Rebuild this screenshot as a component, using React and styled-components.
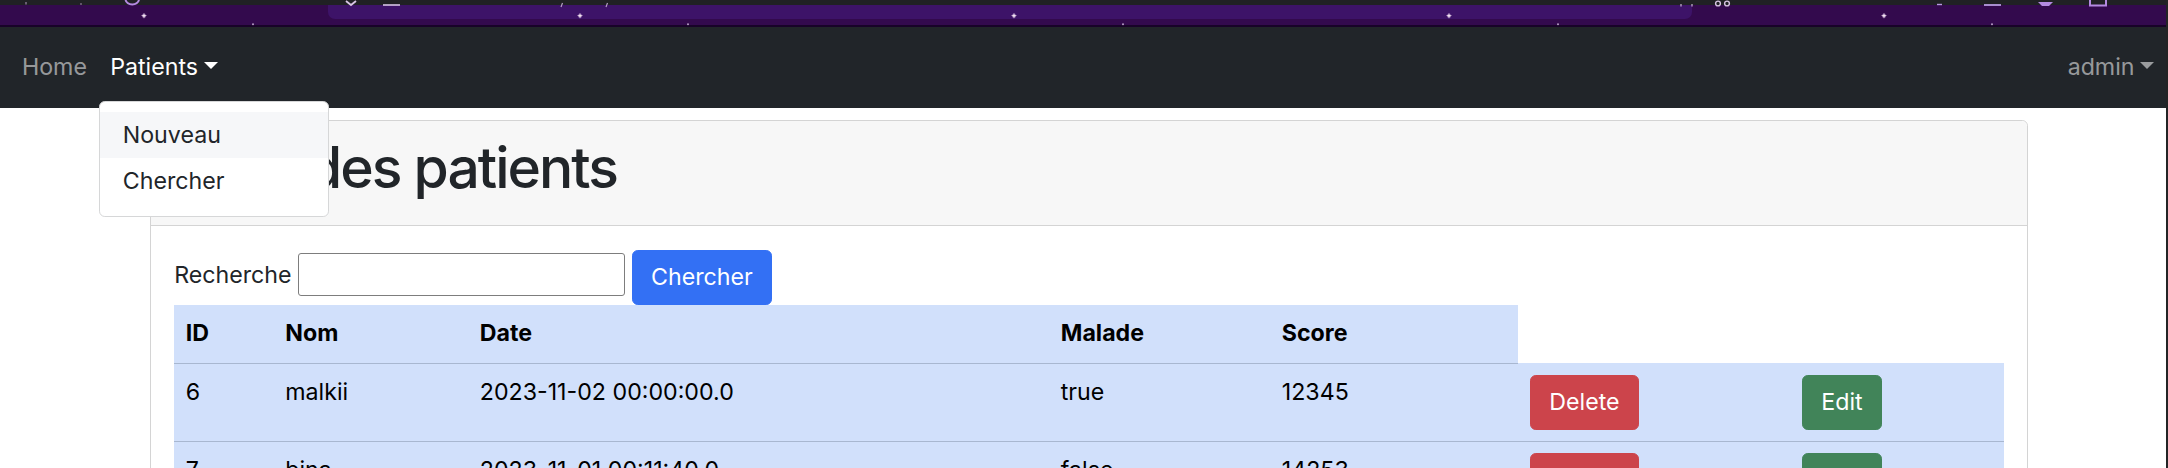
import React from "react";
import styled, { createGlobalStyle } from "styled-components";

const GlobalStyle = createGlobalStyle`
  html, body {
    margin: 0;
    padding: 0;
    overflow: hidden;
    background: #ffffff;
  }
  body {
    font-family: Inter, "Noto Sans", sans-serif;
    font-size: 23.2px;
    line-height: 34.8px;
    color: #212529;
  }
  *, *::before, *::after { box-sizing: border-box; }
`;

const Page = styled.div`
  position: relative;
  width: 2168px;
  height: 468px;
  overflow: hidden;
  border-right: 2px solid #232425;
  background: #ffffff;
`;

/* ---------- browser chrome strip ---------- */
const ChromeStrip = styled.div`
  position: relative;
  height: 27px;
  display: flex;
  background: linear-gradient(
    #202124 0 5px,
    #330a4d 5px 25px,
    #180328 25px 27px
  );
`;

const AddressBar = styled.div`
  margin: 5px 0 0 328px;
  width: 1364px;
  height: 14px;
  background: #3d1368;
  border-radius: 0 0 7px 7px;
`;

const ChromeArt = styled.svg`
  position: absolute;
  left: 0;
  top: 0;
  pointer-events: none;
`;

const starXs = [144, 580, 1014, 1449, 1884];
const dotXs = [253, 688, 1123, 1558, 1992];

function Sparkle({ x, y }) {
  const d = `M${x},${y - 3} L${x + 0.7},${y - 0.7} L${x + 3},${y} L${x + 0.7},${y + 0.7} L${x},${y + 3} L${x - 0.7},${y + 0.7} L${x - 3},${y} L${x - 0.7},${y - 0.7} Z`;
  return (
    <g>
      <circle cx={x} cy={y} r="2.2" fill="#a57fc0" opacity="0.5" />
      <path d={d} fill="#f4e6f2" />
    </g>
  );
}

function ChromeDecor() {
  return (
    <ChromeArt width="2166" height="27" viewBox="0 0 2166 27">
      {starXs.map((x) => (
        <Sparkle key={x} x={x} y={15.7} />
      ))}
      {dotXs.map((x) => (
        <circle key={x} cx={x} cy="24.2" r="1" fill="#b59cc4" />
      ))}
      {/* cut-off toolbar icons */}
      <path d="M26 2 L26 4.5" stroke="#9a86a8" strokeWidth="1.2" />
      <path d="M81 3 L81 5" stroke="#8b7898" strokeWidth="1.2" />
      <path d="M125.5 0 A7 6 0 0 0 139 0" fill="none" stroke="#b58be2" strokeWidth="2" />
      <path d="M346 1 L351 5 L356 1" fill="none" stroke="#d9c6e6" strokeWidth="1.8" />
      <path d="M383 5 L400 5" stroke="#d5c3e4" strokeWidth="1.6" />
      <path d="M561 7 L562.5 3" stroke="#b9a3c9" strokeWidth="1.2" />
      <path d="M606 7 L607.5 3" stroke="#b9a3c9" strokeWidth="1.2" />
      <path d="M1681 4 L1681 6.5" stroke="#c9b6d6" strokeWidth="1.2" />
      <path d="M1692 4 L1692 6.5" stroke="#c9b6d6" strokeWidth="1.2" />
      <circle cx="1718" cy="3.5" r="2.4" fill="none" stroke="#d6c4e2" strokeWidth="1.4" />
      <circle cx="1727" cy="3.5" r="2.4" fill="none" stroke="#d6c4e2" strokeWidth="1.4" />
      <path d="M1937 4.5 L1942 4.5" stroke="#b79be0" strokeWidth="1.4" />
      <path d="M1984 5 L2001 5" stroke="#b79be0" strokeWidth="1.8" />
      <path d="M2038 2 L2053 2 L2049 6 L2042 6 Z" fill="#b48ae2" />
      <path d="M2090 0 L2090 5.5 L2106 5.5 L2106 0" fill="none" stroke="#b48ae2" strokeWidth="2" />
    </ChromeArt>
  );
}

/* ---------- navbar ---------- */
const NavBar = styled.nav`
  height: 81px;
  background: #212529;
  display: flex;
  align-items: center;
  justify-content: space-between;
  padding: 0 0 0 10.4px;
`;

const NavGroup = styled.ul`
  display: flex;
  align-items: center;
  margin: 0;
  padding: 0;
  list-style: none;
`;

const NavItem = styled.li`
  position: relative;
`;

const NavLink = styled.a`
  display: block;
  padding: 11.6px;
  font-size: 23.2px;
  line-height: 34.8px;
  text-decoration: none;
  white-space: nowrap;
  color: ${(p) => (p.$active ? "#ffffff" : "rgba(255,255,255,0.55)")};
`;

const Caret = styled.span`
  display: inline-block;
  margin-left: 5.9px;
  vertical-align: 0.255em;
  border-top: 7px solid currentColor;
  border-left: 7px solid transparent;
  border-right: 7px solid transparent;
`;

const DropdownMenu = styled.ul`
  position: absolute;
  left: 0;
  top: 100%;
  margin: 4.5px 0 0;
  width: 230px;
  padding: 10px 0 11px;
  list-style: none;
  background: #ffffff;
  border: 1px solid #d6d7d8;
  border-radius: 5.8px;
  z-index: 10;
`;

const DropdownItem = styled.li`
  padding: 5.8px 23.2px;
  line-height: 34.8px;
  font-size: 23.2px;
  color: #212529;
  white-space: nowrap;
  background: ${(p) => (p.$hover ? "#f6f7f9" : "transparent")};
`;

/* ---------- content ---------- */
const Container = styled.main`
  margin: 12px 0 0 150px;
  width: 1878px;
`;

const Card = styled.section`
  border: 1px solid #d4d4d4;
  border-radius: 5.8px;
  background: #ffffff;
  min-height: 400px;
`;

const CardHeader = styled.header`
  background: #f7f7f7;
  border-bottom: 1px solid #d4d4d4;
  border-radius: 5.8px 5.8px 0 0;
  padding: 11.6px 23.2px;
`;

const Title = styled.h1`
  margin: 0 0 11.6px;
  font-size: 57px;
  font-weight: 500;
  letter-spacing: -2px;
  line-height: 69.6px;
  color: #212529;
`;

const CardBody = styled.div`
  padding: 23.2px;
`;

const SearchForm = styled.form`
  display: flex;
  align-items: flex-start;
  height: 55px;
`;

const Label = styled.label`
  margin-top: 8px;
  font-size: 23.2px;
  line-height: 34.8px;
  color: #212529;
`;

const TextInput = styled.input`
  margin: 3px 0 0 6px;
  width: 327px;
  height: 43px;
  border: 1px solid #7d7d7d;
  border-radius: 3px;
  background: #ffffff;
  font: inherit;
  padding: 0 6px;
`;

const Button = styled.button`
  height: 55px;
  margin-left: ${(p) => p.$ml || 0}px;
  padding: 0 18.5px;
  border: 1px solid ${(p) => p.$bg};
  border-radius: 5.8px;
  background: ${(p) => p.$bg};
  color: #ffffff;
  font-family: Inter, "Noto Sans", sans-serif;
  font-size: 23.2px;
  line-height: 53px;
  white-space: nowrap;
`;

const Table = styled.table`
  width: 100%;
  border-collapse: collapse;
  table-layout: fixed;
  color: #000000;
  font-size: 23.2px;
  line-height: 34.8px;
`;

const HeadCell = styled.th`
  text-align: left;
  font-weight: 700;
  padding: 11.6px;
  background: #d1e0fb;
  border-bottom: 1px solid #a8b7d0;
  white-space: nowrap;
`;

const Cell = styled.td`
  padding: 11.6px 11.6px 11px;
  background: #d1e0fb;
  border-bottom: 1px solid #a8b7d0;
  vertical-align: top;
  white-space: nowrap;
`;

const colWidths = [99.5, 194.5, 581, 221, 248, 272, null];

const patients = [
  { id: 6, nom: "malkii", date: "2023-11-02 00:00:00.0", malade: "true", score: 12345 },
  { id: 7, nom: "bina", date: "2023-11-01 00:11:40.0", malade: "false", score: 14253 },
];

export default function App() {
  return (
    <Page>
      <GlobalStyle />
      <ChromeStrip>
        <AddressBar />
        <ChromeDecor />
      </ChromeStrip>

      <NavBar>
        <NavGroup>
          <NavItem>
            <NavLink href="#">Home</NavLink>
          </NavItem>
          <NavItem>
            <NavLink href="#" $active>
              Patients
              <Caret />
            </NavLink>
            <DropdownMenu>
              <DropdownItem $hover>Nouveau</DropdownItem>
              <DropdownItem>Chercher</DropdownItem>
            </DropdownMenu>
          </NavItem>
        </NavGroup>
        <NavGroup>
          <NavItem>
            <NavLink href="#">
              admin
              <Caret />
            </NavLink>
          </NavItem>
        </NavGroup>
      </NavBar>

      <Container>
        <Card>
          <CardHeader>
            <Title>Liste des patients</Title>
          </CardHeader>
          <CardBody>
            <SearchForm onSubmit={(e) => e.preventDefault()}>
              <Label htmlFor="kw">Recherche</Label>
              <TextInput id="kw" type="text" />
              <Button type="submit" $bg="#3370f4" $ml={7}>
                Chercher
              </Button>
            </SearchForm>
            <Table>
              <colgroup>
                {colWidths.map((w, i) => (
                  <col key={i} style={w ? { width: `${w}px` } : undefined} />
                ))}
              </colgroup>
              <thead>
                <tr>
                  <HeadCell>ID</HeadCell>
                  <HeadCell>Nom</HeadCell>
                  <HeadCell>Date</HeadCell>
                  <HeadCell>Malade</HeadCell>
                  <HeadCell>Score</HeadCell>
                </tr>
              </thead>
              <tbody>
                {patients.map((p) => (
                  <tr key={p.id}>
                    <Cell>{p.id}</Cell>
                    <Cell>{p.nom}</Cell>
                    <Cell>{p.date}</Cell>
                    <Cell>{p.malade}</Cell>
                    <Cell>{p.score}</Cell>
                    <Cell>
                      <Button type="button" $bg="#cc444b">Delete</Button>
                    </Cell>
                    <Cell>
                      <Button type="button" $bg="#418459">Edit</Button>
                    </Cell>
                  </tr>
                ))}
              </tbody>
            </Table>
          </CardBody>
        </Card>
      </Container>
    </Page>
  );
}
